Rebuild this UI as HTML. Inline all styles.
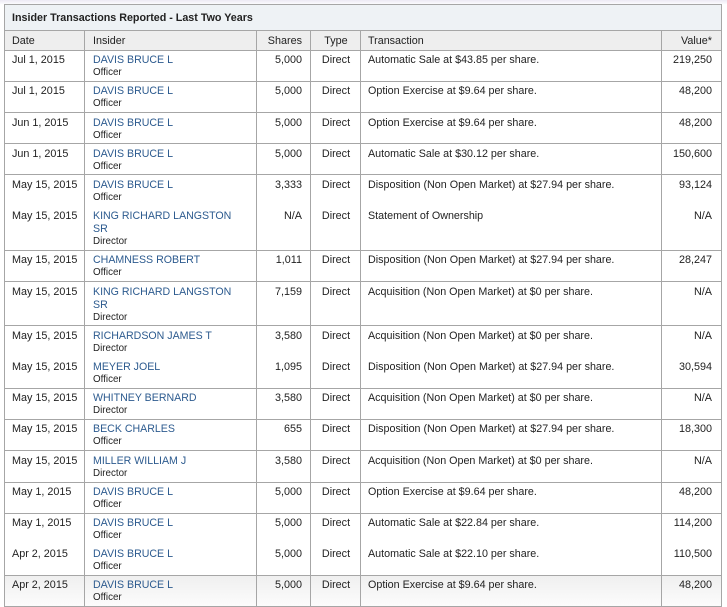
<!DOCTYPE html>
<html><head><meta charset="utf-8">
<style>
html,body{margin:0;padding:0;background:#fff}
body{position:relative;width:727px;height:607px;overflow:hidden;font-family:"Liberation Sans",sans-serif;font-size:10.8px;color:#222}
.top{position:absolute;left:0;top:0;width:727px;height:4px;background:linear-gradient(#ece9f4,#fbfbfd)}
.b{position:absolute}
.h{position:absolute;background:#a6a6a6;left:4px;width:718px;height:1px}
.w{position:absolute;background:#a6a6a6;width:1px}
.r{position:absolute;left:0;width:727px;height:14px;line-height:14px}
.r span,.r a{position:absolute;top:1px;white-space:nowrap}
.d{left:12px}
.n{left:93px;color:#2d5b8f;font-size:10.62px}
.o{left:93px;top:14px!important;font-size:9.8px}
.s{right:425px}
.t{left:311px;width:50px;text-align:center}
.x{left:368px;font-size:10.74px}
.v{right:15px}
</style></head><body>
<div class="top"></div>
<div class="b" style="left:4px;top:4px;width:718px;height:26px;background:#eef2f5"></div>
<div class="b" style="left:4px;top:30px;width:718px;height:20px;background:#eeeeee"></div>
<div class="b" style="left:4px;top:575px;width:718px;height:31px;background:linear-gradient(#efefef,#fcfcfc)"></div>

<div class="h" style="top:4px"></div>
<div class="h" style="top:30px"></div>
<div class="h" style="top:50px"></div>
<div class="h" style="top:81px"></div>
<div class="h" style="top:112px"></div>
<div class="h" style="top:143px"></div>
<div class="h" style="top:174px"></div>
<div class="h" style="top:250px"></div>
<div class="h" style="top:281px"></div>
<div class="h" style="top:325px"></div>
<div class="h" style="top:388px"></div>
<div class="h" style="top:419px"></div>
<div class="h" style="top:450px"></div>
<div class="h" style="top:482px"></div>
<div class="h" style="top:513px"></div>
<div class="h" style="top:575px"></div>
<div class="h" style="top:606px"></div>
<div class="w" style="left:4px;top:4px;height:603px"></div>
<div class="w" style="left:721px;top:4px;height:603px"></div>
<div class="w" style="left:84px;top:30px;height:577px"></div>
<div class="w" style="left:256px;top:30px;height:577px"></div>
<div class="w" style="left:310px;top:30px;height:577px"></div>
<div class="w" style="left:360px;top:30px;height:577px"></div>
<div class="w" style="left:661px;top:30px;height:577px"></div>

<div class="r" style="top:10px"><span style="left:12px;font-weight:bold;font-size:10.73px">Insider Transactions Reported - Last Two Years</span></div>
<div class="r" style="top:33px"><span class="d">Date</span><span style="left:93px">Insider</span><span class="s">Shares</span><span class="t">Type</span><span class="x">Transaction</span><span class="v">Value*</span></div>

<div class="r" style="top:52px"><span class="d">Jul 1, 2015</span><a class="n">DAVIS BRUCE L</a><span class="o">Officer</span><span class="s">5,000</span><span class="t">Direct</span><span class="x">Automatic Sale at $43.85 per share.</span><span class="v">219,250</span></div>
<div class="r" style="top:83px"><span class="d">Jul 1, 2015</span><a class="n">DAVIS BRUCE L</a><span class="o">Officer</span><span class="s">5,000</span><span class="t">Direct</span><span class="x">Option Exercise at $9.64 per share.</span><span class="v">48,200</span></div>
<div class="r" style="top:115px"><span class="d">Jun 1, 2015</span><a class="n">DAVIS BRUCE L</a><span class="o">Officer</span><span class="s">5,000</span><span class="t">Direct</span><span class="x">Option Exercise at $9.64 per share.</span><span class="v">48,200</span></div>
<div class="r" style="top:146px"><span class="d">Jun 1, 2015</span><a class="n">DAVIS BRUCE L</a><span class="o">Officer</span><span class="s">5,000</span><span class="t">Direct</span><span class="x">Automatic Sale at $30.12 per share.</span><span class="v">150,600</span></div>
<div class="r" style="top:177px"><span class="d">May 15, 2015</span><a class="n">DAVIS BRUCE L</a><span class="o">Officer</span><span class="s">3,333</span><span class="t">Direct</span><span class="x">Disposition (Non Open Market) at $27.94 per share.</span><span class="v">93,124</span></div>
<div class="r" style="top:208px"><span class="d">May 15, 2015</span><a class="n">KING RICHARD LANGSTON</a><a class="n" style="top:14px">SR</a><span class="o" style="top:27px!important">Director</span><span class="s">N/A</span><span class="t">Direct</span><span class="x">Statement of Ownership</span><span class="v">N/A</span></div>
<div class="r" style="top:252px"><span class="d">May 15, 2015</span><a class="n">CHAMNESS ROBERT</a><span class="o">Officer</span><span class="s">1,011</span><span class="t">Direct</span><span class="x">Disposition (Non Open Market) at $27.94 per share.</span><span class="v">28,247</span></div>
<div class="r" style="top:284px"><span class="d">May 15, 2015</span><a class="n">KING RICHARD LANGSTON</a><a class="n" style="top:14px">SR</a><span class="o" style="top:27px!important">Director</span><span class="s">7,159</span><span class="t">Direct</span><span class="x">Acquisition (Non Open Market) at $0 per share.</span><span class="v">N/A</span></div>
<div class="r" style="top:328px"><span class="d">May 15, 2015</span><a class="n">RICHARDSON JAMES T</a><span class="o">Director</span><span class="s">3,580</span><span class="t">Direct</span><span class="x">Acquisition (Non Open Market) at $0 per share.</span><span class="v">N/A</span></div>
<div class="r" style="top:359px"><span class="d">May 15, 2015</span><a class="n">MEYER JOEL</a><span class="o">Officer</span><span class="s">1,095</span><span class="t">Direct</span><span class="x">Disposition (Non Open Market) at $27.94 per share.</span><span class="v">30,594</span></div>
<div class="r" style="top:390px"><span class="d">May 15, 2015</span><a class="n">WHITNEY BERNARD</a><span class="o">Director</span><span class="s">3,580</span><span class="t">Direct</span><span class="x">Acquisition (Non Open Market) at $0 per share.</span><span class="v">N/A</span></div>
<div class="r" style="top:421px"><span class="d">May 15, 2015</span><a class="n">BECK CHARLES</a><span class="o">Officer</span><span class="s">655</span><span class="t">Direct</span><span class="x">Disposition (Non Open Market) at $27.94 per share.</span><span class="v">18,300</span></div>
<div class="r" style="top:453px"><span class="d">May 15, 2015</span><a class="n">MILLER WILLIAM J</a><span class="o">Director</span><span class="s">3,580</span><span class="t">Direct</span><span class="x">Acquisition (Non Open Market) at $0 per share.</span><span class="v">N/A</span></div>
<div class="r" style="top:484px"><span class="d">May 1, 2015</span><a class="n">DAVIS BRUCE L</a><span class="o">Officer</span><span class="s">5,000</span><span class="t">Direct</span><span class="x">Option Exercise at $9.64 per share.</span><span class="v">48,200</span></div>
<div class="r" style="top:515px"><span class="d">May 1, 2015</span><a class="n">DAVIS BRUCE L</a><span class="o">Officer</span><span class="s">5,000</span><span class="t">Direct</span><span class="x">Automatic Sale at $22.84 per share.</span><span class="v">114,200</span></div>
<div class="r" style="top:546px"><span class="d">Apr 2, 2015</span><a class="n">DAVIS BRUCE L</a><span class="o">Officer</span><span class="s">5,000</span><span class="t">Direct</span><span class="x">Automatic Sale at $22.10 per share.</span><span class="v">110,500</span></div>
<div class="r" style="top:577px"><span class="d">Apr 2, 2015</span><a class="n">DAVIS BRUCE L</a><span class="o">Officer</span><span class="s">5,000</span><span class="t">Direct</span><span class="x">Option Exercise at $9.64 per share.</span><span class="v">48,200</span></div>
</body></html>
